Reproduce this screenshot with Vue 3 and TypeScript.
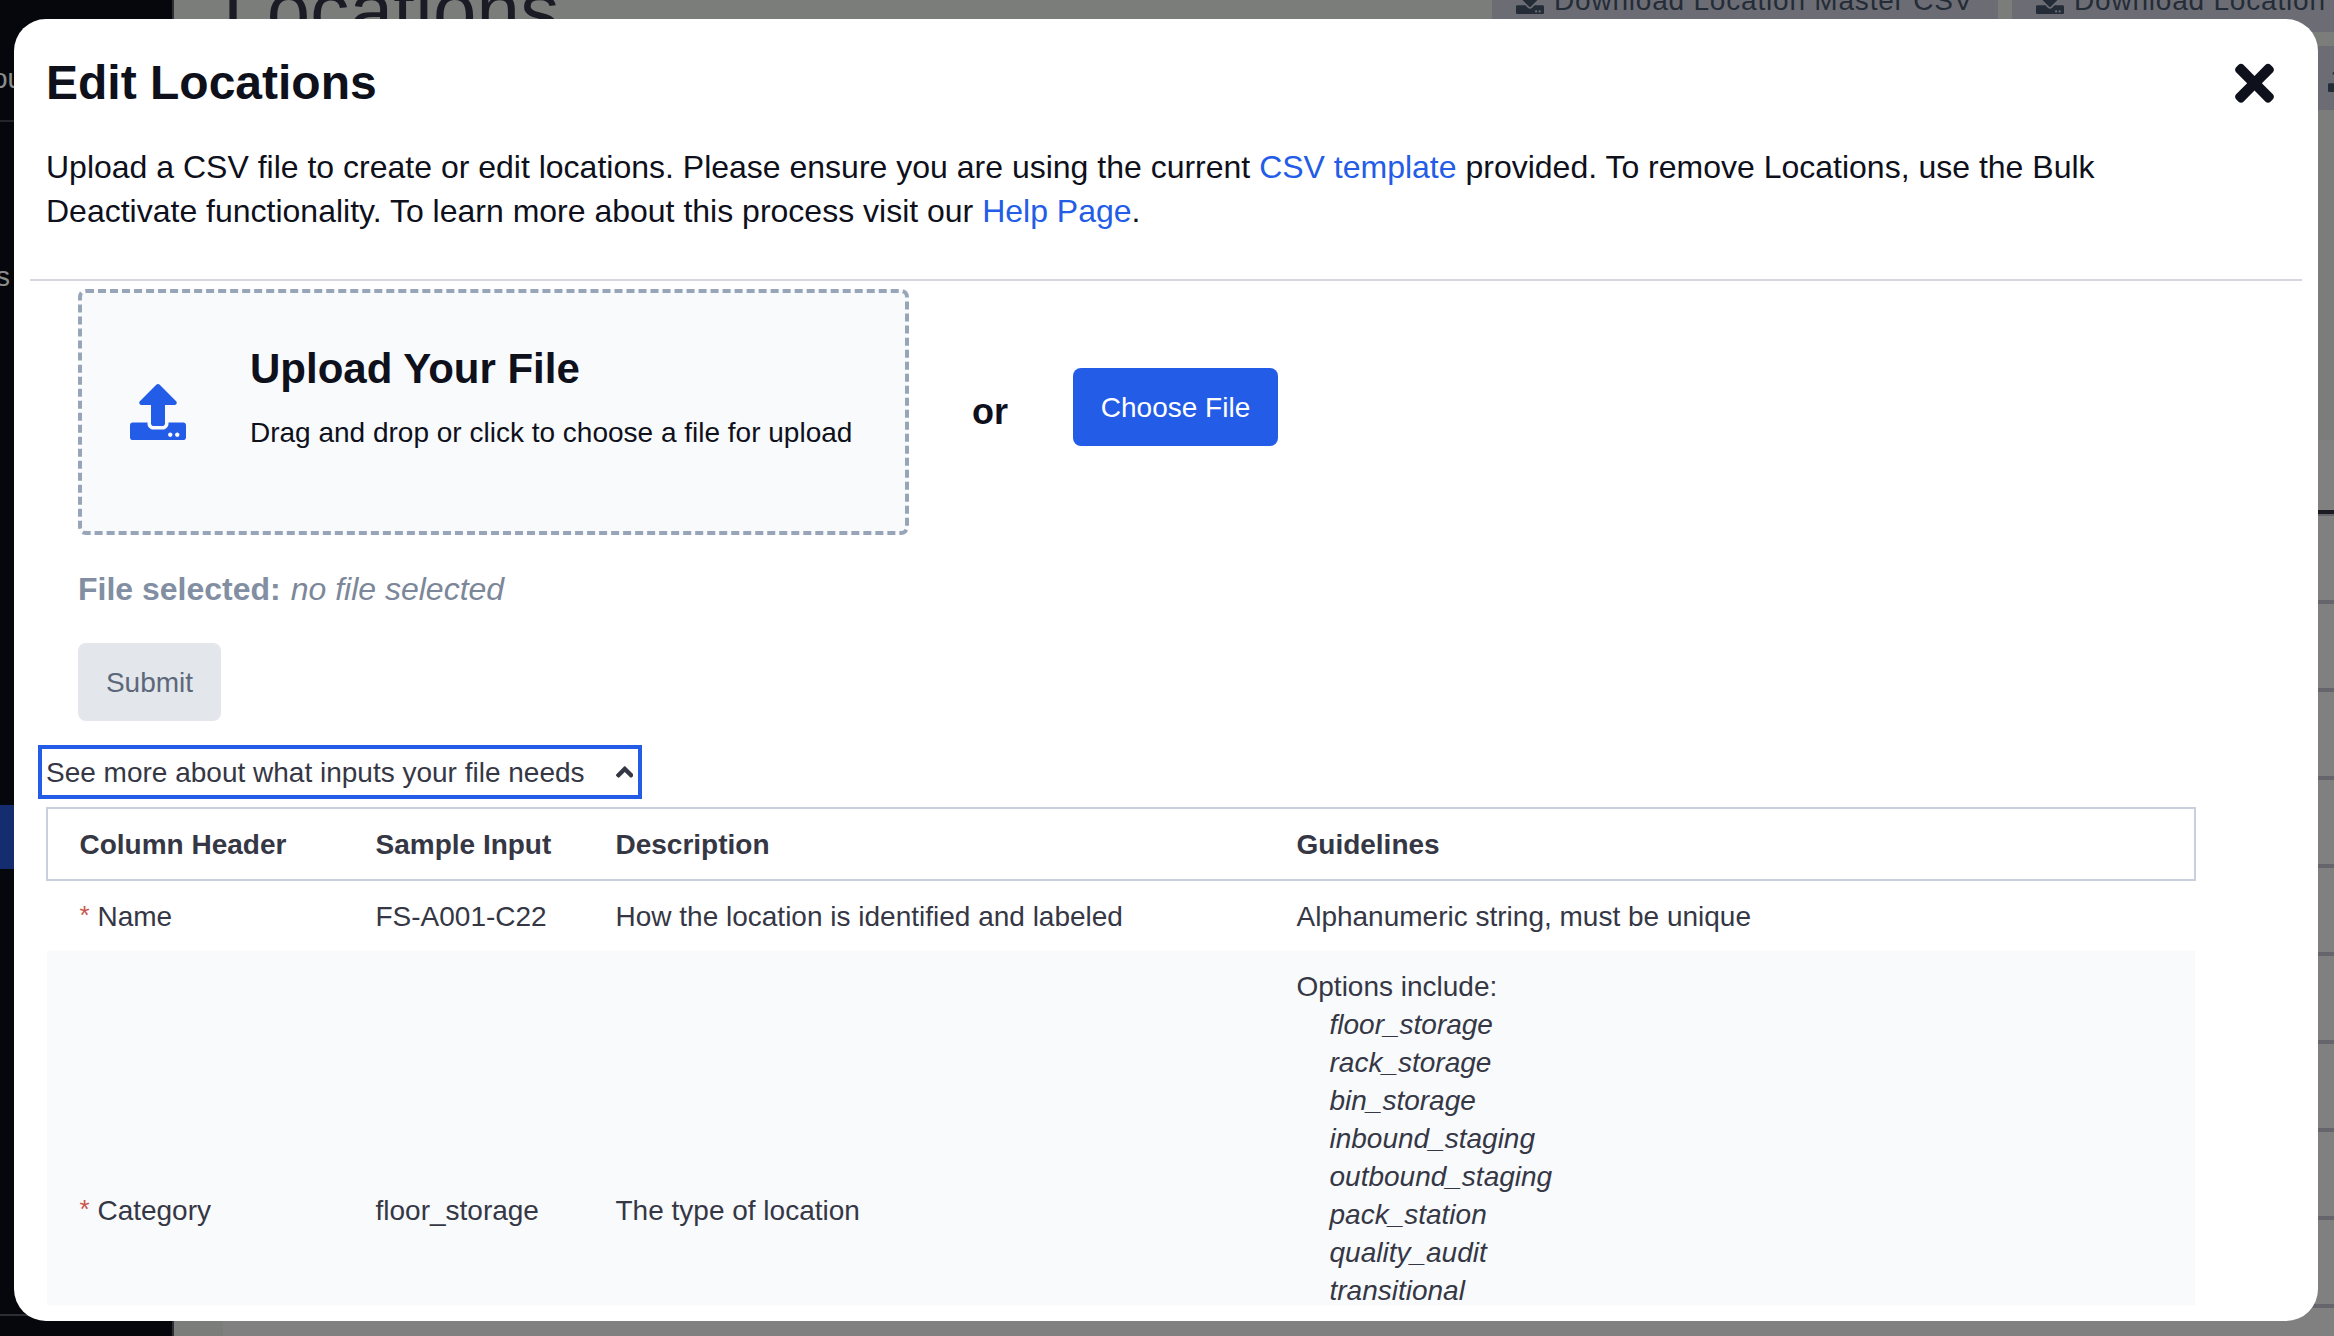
<script setup lang="ts">
interface InputRow {
  name: string
  sample: string
  description: string
  guideline: string
  options?: string[]
}

const headers: string[] = ['Column Header', 'Sample Input', 'Description', 'Guidelines']

const rows: InputRow[] = [
  {
    name: 'Name',
    sample: 'FS-A001-C22',
    description: 'How the location is identified and labeled',
    guideline: 'Alphanumeric string, must be unique',
  },
  {
    name: 'Category',
    sample: 'floor_storage',
    description: 'The type of location',
    guideline: 'Options include:',
    options: [
      'floor_storage',
      'rack_storage',
      'bin_storage',
      'inbound_staging',
      'outbound_staging',
      'pack_station',
      'quality_audit',
      'transitional',
    ],
  },
]

const uploadPath =
  'M296 384h-80c-13.3 0-24-10.7-24-24V192h-87.7c-17.8 0-26.7-21.5-14.1-34.1L242.3 5.7c7.5-7.5 19.8-7.5 27.3 0l152.2 152.2c12.6 12.6 3.7 34.1-14.1 34.1H320v168c0 13.3-10.7 24-24 24zm216-8v112c0 13.3-10.7 24-24 24H24c-13.3 0-24-10.7-24-24V376c0-13.3 10.7-24 24-24h136v8c0 30.9 25.1 56 56 56h80c30.9 0 56-25.1 56-56v-8h136c13.3 0 24 10.7 24 24zm-124 88c0-11-9-20-20-20s-20 9-20 20 9 20 20 20 20-9 20-20zm64 0c0-11-9-20-20-20s-20 9-20 20 9 20 20 20 20-9 20-20z'
const downloadPath =
  'M216 0h80c13.3 0 24 10.7 24 24v168h87.7c17.8 0 26.7 21.5 14.1 34.1L269.7 378.3c-7.5 7.5-19.8 7.5-27.3 0L90.1 226.1c-12.6-12.6-3.7-34.1 14.1-34.1H192V24c0-13.3 10.7-24 24-24zm296 376v112c0 13.3-10.7 24-24 24H24c-13.3 0-24-10.7-24-24V376c0-13.3 10.7-24 24-24h146.7l49 49c20.1 20.1 52.5 20.1 72.6 0l49-49H488c13.3 0 24 10.7 24 24zm-124 88c0-11-9-20-20-20s-20 9-20 20 9 20 20 20 20-9 20-20zm64 0c0-11-9-20-20-20s-20 9-20 20 9 20 20 20 20-9 20-20z'
</script>

<template>
  <div class="screen">
    <div class="page">
      <aside class="sidebar">
        <div class="side-account">ou</div>
        <div class="side-link">s</div>
        <div class="side-active"></div>
        <div class="side-foot"></div>
      </aside>
      <main class="main">
        <div class="toolbar">
          <h1 class="page-title">Locations</h1>
          <div class="tool-btn first">
            <svg viewBox="0 0 512 512"><path :d="downloadPath" /></svg>
            <span>Download Location Master CSV</span>
          </div>
          <div class="tool-btn second">
            <svg viewBox="0 0 512 512"><path :d="downloadPath" /></svg>
            <span>Download Location</span>
          </div>
        </div>
        <div class="upload-row">
          <div class="tool-btn third">
            <svg viewBox="0 0 512 512"><path :d="uploadPath" /></svg>
          </div>
        </div>
        <div class="card">
          <div class="card-head"></div>
          <div v-for="n in 9" :key="n" class="card-row"></div>
        </div>
      </main>
    </div>

    <section class="modal" role="dialog">
      <header class="modal-head">
        <div class="title-row">
          <h2>Edit Locations</h2>
          <button class="close" aria-label="Close">
            <svg viewBox="0 0 352 512"><path d="M242.72 256l100.07-100.07c12.28-12.28 12.28-32.19 0-44.48l-22.24-22.24c-12.28-12.28-32.19-12.28-44.48 0L176 189.28 75.93 89.21c-12.28-12.28-32.19-12.28-44.48 0L9.21 111.45c-12.28 12.28-12.28 32.19 0 44.48L109.28 256 9.21 356.07c-12.28 12.28-12.28 32.19 0 44.48l22.24 22.24c12.28 12.28 32.2 12.28 44.48 0L176 322.72l100.07 100.07c12.28 12.28 32.2 12.28 44.48 0l22.24-22.24c12.28-12.28 12.28-32.19 0-44.48L242.72 256z" /></svg>
          </button>
        </div>
        <p class="intro">
          Upload a CSV file to create or edit locations. Please ensure you are using the current
          <a>CSV template</a> provided. To remove Locations, use the Bulk<br />
          Deactivate functionality. To learn more about this process visit our <a>Help Page</a>.
        </p>
      </header>

      <div class="modal-body">
        <div class="upload">
          <div class="dropzone">
            <svg viewBox="0 0 512 512"><path :d="uploadPath" /></svg>
            <div class="drop-text">
              <h3>Upload Your File</h3>
              <p>Drag and drop or click to choose a file for upload</p>
            </div>
          </div>
          <span class="or">or</span>
          <button class="btn primary">Choose File</button>
        </div>
        <div class="selected"><b>File selected:</b> <i>no file selected</i></div>
        <button class="btn submit">Submit</button>
        <button class="toggle">
          <span>See more about what inputs your file needs</span>
          <svg viewBox="0 0 320 512"><path d="M177 159.7l136 136c9.4 9.4 9.4 24.6 0 33.9l-22.6 22.6c-9.4 9.4-24.6 9.4-33.9 0L160 255.9l-96.4 96.4c-9.4 9.4-24.6 9.4-33.9 0L7 329.7c-9.4-9.4-9.4-24.6 0-33.9l136-136c9.4-9.5 24.6-9.5 34-.1z" /></svg>
        </button>
        <div class="table">
          <div class="row head">
            <div v-for="h in headers" :key="h" class="cell">{{ h }}</div>
          </div>
          <div v-for="r in rows" :key="r.name" class="row" :class="{ tall: r.options }">
            <div class="cell"><span class="req">*</span> {{ r.name }}</div>
            <div class="cell">{{ r.sample }}</div>
            <div class="cell">{{ r.description }}</div>
            <div class="cell guide">
              {{ r.guideline }}
              <ul v-if="r.options">
                <li v-for="o in r.options" :key="o">{{ o }}</li>
              </ul>
            </div>
          </div>
        </div>
      </div>
    </section>
  </div>
</template>

<style>
html,
body {
  margin: 0;
  overflow: hidden;
  background: #7b7d7b;
}
</style>

<style scoped>
* {
  box-sizing: border-box;
}
h1,
h2,
h3,
p,
ul {
  margin: 0;
  padding: 0;
}
svg {
  display: block;
  fill: currentColor;
  flex: none;
}
button {
  font: inherit;
  border: 0;
  background: none;
  padding: 0;
  margin: 0;
}
.screen {
  position: relative;
  width: 2334px;
  height: 1336px;
  overflow: hidden;
  font-family: 'Liberation Sans', Arial, Helvetica, sans-serif;
  font-size: 28px;
  line-height: 38px;
  color: #353745;
}

/* dimmed page behind the dialog */
.page {
  display: flex;
  width: 100%;
  height: 100%;
  background: #7b7d7b;
}
.sidebar {
  display: flex;
  flex-direction: column;
  width: 174px;
  height: 100%;
  background: #06070d;
  border-right: 2px solid #2d2e38;
  color: #8b8c8c;
  flex: none;
}
.side-account {
  height: 122px;
  padding-top: 60px;
  margin-left: -8px;
  border-bottom: 2px solid #232429;
}
.side-link {
  height: 683px;
  padding-top: 136px;
  margin-left: -4px;
}
.side-active {
  height: 64px;
  background: #132d6f;
}
.side-foot {
  height: 447px;
  border-bottom: 2px solid #2d2e33;
}
.main {
  display: flex;
  flex-direction: column;
  width: 2160px;
  height: 100%;
  overflow: hidden;
}
.toolbar {
  display: flex;
  align-items: flex-start;
  height: 46px;
  padding-left: 49px;
  flex: none;
}
.page-title {
  flex: none;
  width: 1269px;
  margin-top: -40px;
  font-size: 78px;
  line-height: 100px;
  letter-spacing: 0.3px;
  font-weight: 400;
  color: #1a1b24;
}
.tool-btn {
  display: flex;
  align-items: center;
  gap: 10px;
  height: 64px;
  background: #6c6d74;
  color: #242c37;
  padding-left: 24px;
  letter-spacing: 0.8px;
  white-space: nowrap;
  flex: none;
}
.tool-btn svg {
  width: 28px;
  height: 28px;
}
.tool-btn span {
  padding-top: 2px;
}
.first,
.second {
  margin-top: -32px;
}
.first {
  width: 506px;
}
.second {
  width: 420px;
  margin-left: 14px;
}
.upload-row {
  display: flex;
  height: 394px;
  padding-left: 2130px;
  flex: none;
}
.third {
  width: 120px;
}
.card {
  flex: none;
  width: 2111px;
  height: 900px;
  margin-left: 49px;
  background: #808080;
}
.card-head {
  height: 76px;
  border-bottom: 2px solid #65656b;
  box-shadow: inset 0 -4px 0 #1b1b24;
}
.card-row {
  height: 88px;
  border-bottom: 4px solid #65656b;
}

/* dialog */
.modal {
  position: absolute;
  left: 14px;
  top: 19px;
  width: 2304px;
  height: 1302px;
  border-radius: 32px;
  background: #fff;
  overflow: hidden;
}
.modal-head {
  height: 262px;
  margin: 0 16px;
  padding: 34px 28px 0 16px;
  border-bottom: 2px solid #d6d8e1;
  color: #0e101b;
}
.title-row {
  display: flex;
  justify-content: space-between;
  align-items: center;
  height: 60px;
}
h2 {
  font-size: 48px;
  line-height: 60px;
  font-weight: 700;
}
.close {
  color: inherit;
}
.close svg {
  width: 39px;
  height: 56.5px;
}
.intro {
  margin-top: 32px;
  font-size: 32px;
  line-height: 44px;
  white-space: nowrap;
}
.intro a {
  color: #235ce6;
}
.modal-body {
  display: flex;
  flex-direction: column;
  align-items: flex-start;
  height: 1024px;
  padding: 8px 0 0 33px;
  overflow: hidden;
}
.modal-body > * {
  flex: none;
}
.upload {
  display: flex;
  margin-left: 31px;
  height: 246px;
  color: #0e101b;
}
.dropzone {
  display: flex;
  width: 831px;
  height: 246px;
  padding: 0 0 0 48px;
  border: 4px dashed #98a5b9;
  border-radius: 8px;
  background: #f8fafc;
}
.dropzone svg {
  width: 56px;
  height: 56px;
  margin-top: 91px;
  color: #235ce6;
}
.drop-text {
  margin: 51px 0 0 64px;
  white-space: nowrap;
}
h3 {
  font-size: 42px;
  line-height: 50px;
  font-weight: 700;
}
.drop-text p {
  margin-top: 20px;
}
.or {
  margin: 101px 0 0 63px;
  width: 101px;
  font-size: 36px;
  line-height: 44px;
  font-weight: 700;
}
.btn {
  height: 78px;
  padding: 2px 0 0;
  border-radius: 8px;
}
.primary {
  margin-top: 79px;
  background: #235ce6;
  color: #fff;
  width: 205px;
  white-space: nowrap;
}
.selected {
  margin: 34px 0 0 31px;
  font-size: 32px;
  line-height: 40px;
  color: #828fa3;
}
.selected i {
  margin-left: 1px;
  color: #7c8799;
}
.submit {
  margin: 34px 0 0 31px;
  width: 143px;
  background: #e3e6eb;
  color: #5c687a;
}
.toggle {
  display: flex;
  align-items: center;
  width: 604px;
  height: 54px;
  margin: 24px 0 0 -9px;
  padding: 0 5px 0 4px;
  border: 4px solid #235ce6;
  justify-content: space-between;
  color: #353745;
}
.toggle span {
  padding-top: 2px;
}
.toggle svg {
  width: 17.5px;
  height: 28px;
}
.table {
  margin-top: 8px;
  width: 2148px;
}
.row {
  display: grid;
  grid-template-columns: 296px 240px 681px 1fr;
  align-items: center;
  height: 70px;
  padding: 2px 0 0 32.5px;
}
.head {
  width: 2150px;
  height: 74px;
  margin-left: -1px;
  padding-left: 31.5px;
  border: 2px solid #c9cfdc;
  font-weight: 700;
}
.tall {
  height: 519px;
  padding-top: 0;
  background: #f8fafc;
}
.tall .guide {
  align-self: start;
  padding-top: 17px;
}
.req {
  position: relative;
  top: -2px;
  font-size: 26px;
  line-height: 24px;
  color: #c9554c;
}
ul {
  list-style: none;
  padding-left: 33px;
  font-style: italic;
}
</style>
